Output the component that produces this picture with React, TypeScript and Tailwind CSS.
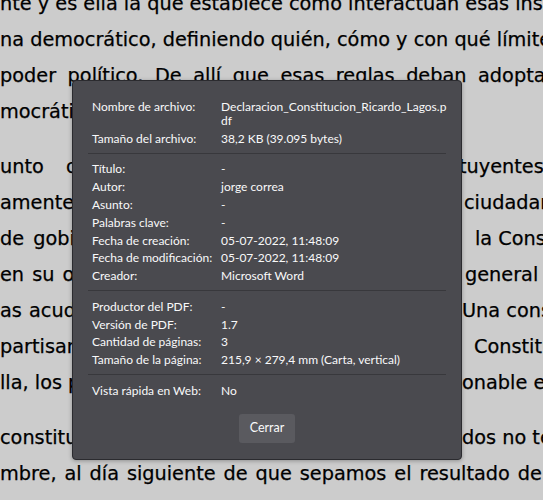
import React from "react";

type Line = { left: string; leftCls: string; boxCls: string; right?: string };

const para1: Line[] = [
  { left: "nte y es ella la que establece cómo interactúan esas instituciones", leftCls: "", boxCls: "w-[560px]" },
  { left: "na democrático, definiendo quién, cómo y con qué límites", leftCls: "", boxCls: "w-[560px]" },
  { left: "poder político. De allí que esas reglas deban adoptarse", leftCls: "[word-spacing:5.4px]", boxCls: "w-[560px]" },
  { left: "mocrático.", leftCls: "", boxCls: "w-[560px]" },
];

const para2: Line[] = [
  { left: "unto de cuerpos constituyentes", leftCls: "[word-spacing:16px]", boxCls: "w-[459px]", right: "tuyentes" },
  { left: "amente, que los ciudadanos", leftCls: "", boxCls: "w-[464px]", right: "ciudadanos" },
  { left: "de gobierno de la Constitución", leftCls: "[word-spacing:3px]", boxCls: "w-[475px]", right: "la Constitución" },
  { left: "en su origen general", leftCls: "[word-spacing:2px]", boxCls: "w-[465px]", right: "general" },
  { left: "as acudan a una constitución", leftCls: "[word-spacing:1px]", boxCls: "w-[462px]", right: "Una constitución" },
  { left: "partisana de la Constitución", leftCls: "", boxCls: "w-[474px]", right: "Constitución" },
  { left: "lla, los partidos razonable en", leftCls: "[word-spacing:0px]", boxCls: "w-[462px]", right: "onable en" },
];

const para3: Line[] = [
  { left: "constituyente ellos todos no tengan", leftCls: "", boxCls: "w-[462px]", right: "dos no tengan" },
  { left: "mbre, al día siguiente de que sepamos el resultado de", leftCls: "[word-spacing:1.8px]", boxCls: "w-[560px]" },
];

function PageLine({ line }: { line: Line }) {
  return (
    <div className="flex h-[36px] whitespace-nowrap leading-[36px]">
      <div className={`shrink-0 overflow-hidden ${line.boxCls}`}>
        <span className={line.leftCls}>{line.left}</span>
      </div>
      {line.right && <div className="shrink-0">{line.right}</div>}
    </div>
  );
}

const rows1: [string, React.ReactNode][] = [
  [
    "Nombre de archivo:",
    <>
      Declaracion_Constitucion_Ricardo_Lagos.p
      <br />
      df
    </>,
  ],
  ["Tamaño del archivo:", "38,2 KB (39.095 bytes)"],
];
const rows2: [string, string][] = [
  ["Título:", "-"],
  ["Autor:", "jorge correa"],
  ["Asunto:", "-"],
  ["Palabras clave:", "-"],
  ["Fecha de creación:", "05-07-2022, 11:48:09"],
  ["Fecha de modificación:", "05-07-2022, 11:48:09"],
  ["Creador:", "Microsoft Word"],
];
const rows3: [string, string][] = [
  ["Productor del PDF:", "-"],
  ["Versión de PDF:", "1.7"],
  ["Cantidad de páginas:", "3"],
  ["Tamaño de la página:", "215,9 × 279,4 mm (Carta, vertical)"],
];

function Row({ label, value }: { label: string; value: React.ReactNode }) {
  return (
    <div className="flex gap-1 px-1">
      <span className="w-[125px] shrink-0 whitespace-nowrap">{label}</span>
      <span className="w-[225px] whitespace-nowrap">{value}</span>
    </div>
  );
}

function Sep() {
  return <div className="mb-[5px] mt-[3px] h-px w-full bg-[#38383c]" />;
}

export default function App() {
  return (
    <div className="relative h-[500px] w-[543px] overflow-hidden bg-[#cccccc] text-[19.3px] text-black [-webkit-text-stroke:0.25px_black] [font-family:'DejaVu_Sans',sans-serif]">
      <div className="mt-[-14px] flex flex-col">
        <div className="mb-[19px]">
          {para1.map((l, i) => (
            <PageLine key={i} line={l} />
          ))}
        </div>
        <div className="mb-[19px]">
          {para2.map((l, i) => (
            <PageLine key={i} line={l} />
          ))}
        </div>
        <div>
          {para3.map((l, i) => (
            <PageLine key={i} line={l} />
          ))}
        </div>
      </div>

      <div className="absolute left-[72px] top-[80px] w-[390px] rounded-[4px] border border-[#2b2b2f] bg-[#4a4a4f] px-[15px] pb-[12px] pt-[15px] text-[12px] leading-[14px] text-[#f9f9fa] shadow-[0_1px_4px_rgba(0,0,0,0.3)] [-webkit-text-stroke:0px] [font-family:Lato,'Noto_Sans',sans-serif]">
        <div className="flex flex-col gap-[3.8px] py-1">
          {rows1.map(([l, v], i) => (
            <Row key={i} label={l} value={v} />
          ))}
          <Sep />
          {rows2.map(([l, v], i) => (
            <Row key={i} label={l} value={v} />
          ))}
          <Sep />
          {rows3.map(([l, v], i) => (
            <Row key={i} label={l} value={v} />
          ))}
          <Sep />
          <Row label="Vista rápida en Web:" value="No" />
          <div className="mt-[12px] flex justify-center">
            <button className="h-[29px] rounded-[3px] bg-[#5a5a5f] px-[11px] text-[12.5px] text-[#f9f9fa]">
              Cerrar
            </button>
          </div>
        </div>
      </div>
    </div>
  );
}
